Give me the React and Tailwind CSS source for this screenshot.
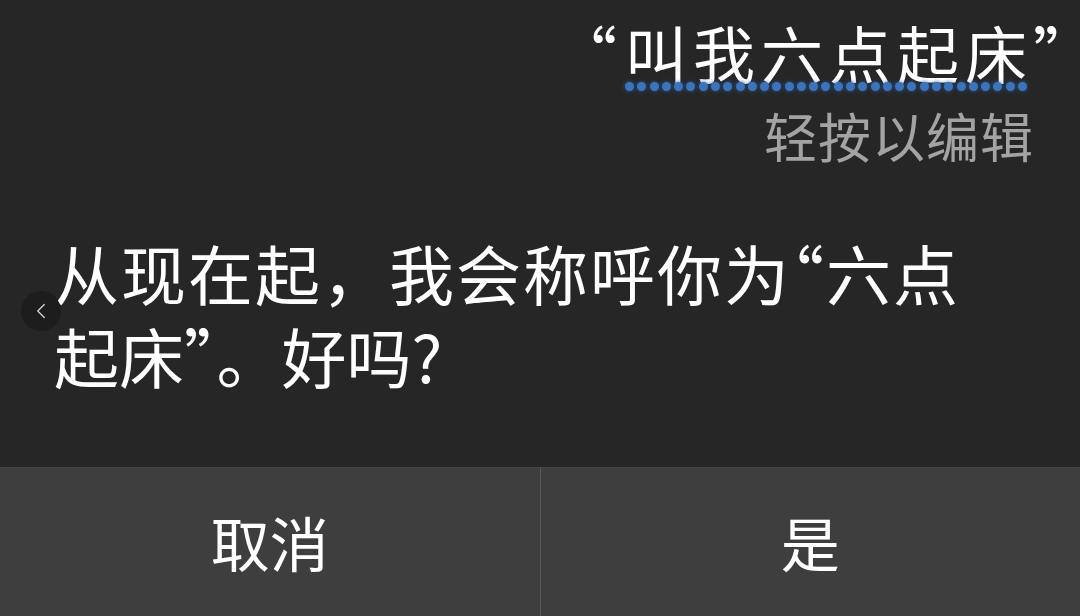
import { ChevronLeft } from "lucide-react";

const font = { fontFamily: '"Noto Sans CJK SC", "Noto Sans", sans-serif' };

function Dots({ count }) {
  return (
    <div className="flex justify-between pr-[6px]">
      {Array.from({ length: count }).map((_, i) => (
        <span
          key={i}
          className="block w-[9px] h-[9px] rounded-full bg-[#3c74bb] shadow-[0_0_4px_#2a5a9a]"
        />
      ))}
    </div>
  );
}

function Heard() {
  return (
    <div className="flex flex-col items-end pt-[14px]">
      <div className="flex items-start text-[62px] leading-[76px] text-white">
        <span className="mr-[8px]">“</span>
        <span className="flex flex-col">
          <span className="tracking-[6px]">叫我六点起床</span>
          <span className="-mt-[8px]">
            <Dots count={33} />
          </span>
        </span>
        <span className="w-[47px]">”</span>
      </div>
      <div className="mr-[46px] mt-[12px] text-[53px] leading-[64px] tracking-[1px] text-[#a3a3a3]">
        轻按以编辑
      </div>
    </div>
  );
}

function Answer() {
  return (
    <div className="relative mt-[64px] pl-[54px] pr-[60px] text-[65px] leading-[83px] tracking-[2px] text-white">
      <p>
        从现在起，我会称呼你为<span className="-ml-[32px]">“</span>六点
      </p>
      <p className="tracking-[0px]">起床”。好吗?</p>
      <div className="absolute left-[21px] top-[60px] w-[40px] h-[40px] rounded-full bg-[#1d1d1d] flex items-center justify-center text-[#cfcfcf]">
        <ChevronLeft size={26} strokeWidth={1.25} />
      </div>
    </div>
  );
}

function Button({ children, border }) {
  return (
    <button
      className={
        "flex-1 flex items-center justify-center bg-[#3e3e3e] text-white text-[59px] " +
        (border ? "border-r border-[#5a5a5a]" : "")
      }
    >
      {children}
    </button>
  );
}

export default function App() {
  return (
    <div
      className="w-[1080px] h-[616px] flex flex-col bg-[#262626] overflow-hidden"
      style={font}
    >
      <div className="flex-1">
        <Heard />
        <Answer />
      </div>
      <div className="h-[149px] flex border-t border-[#454545]">
        <Button border>取消</Button>
        <Button>是</Button>
      </div>
    </div>
  );
}
